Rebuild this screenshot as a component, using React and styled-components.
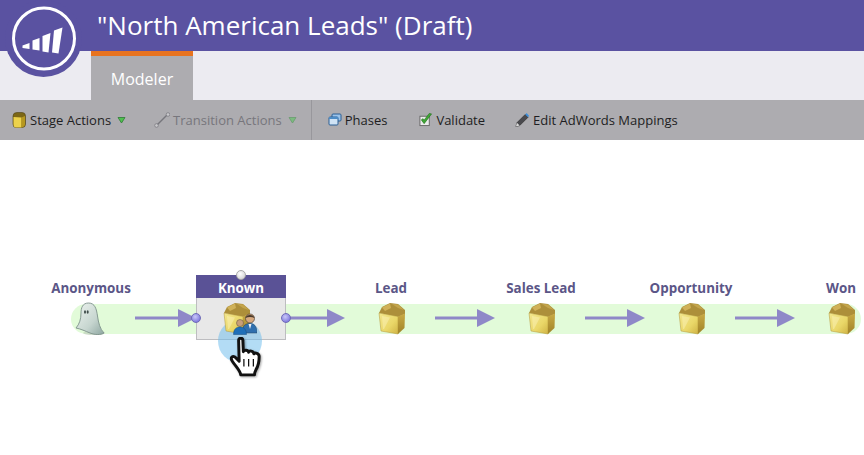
import React from 'react'
import styled, { createGlobalStyle } from 'styled-components'

const Global = createGlobalStyle`
  html, body { margin: 0; padding: 0; background: #fff; }
  body { font-family: "Open Sans", "Liberation Sans", sans-serif; width: 864px; height: 455px; overflow: hidden; }
`

const Page = styled.div`
  position: relative;
  width: 864px;
  height: 455px;
  overflow: hidden;
`

const TitleBar = styled.header`
  height: 51px;
  background: #5a52a1;
  padding-left: 97px;
  display: flex;
  align-items: center;
`

const Title = styled.h1`
  margin: -2px 0 0;
  color: #fff;
  font-size: 26px;
  font-weight: 400;
  white-space: nowrap;
`

const TabBar = styled.div`
  height: 49px;
  background: #ecebf1;
  padding-left: 91px;
  display: flex;
`

const Tab = styled.div`
  width: 102px;
  box-sizing: border-box;
  border-top: 5px solid #e8731f;
  background: #adacb0;
  color: #fff;
  font-size: 16px;
  text-align: center;
  line-height: 47px;
`

const Toolbar = styled.div`
  height: 40px;
  box-sizing: border-box;
  background: #adacb0;
  display: flex;
  align-items: center;
  padding: 0 0 1px 11px;
`

const ToolItem = styled.div`
  display: flex;
  align-items: center;
  gap: ${p => p.$gap}px;
  font-size: 13px;
  color: ${p => (p.$muted ? '#77767c' : '#1e1e22')};
  margin-right: ${p => p.$after ?? 0}px;
  white-space: nowrap;
`

const Caret = styled.svg`
  margin-left: 3px;
`

const Divider = styled.div`
  width: 1px;
  height: 40px;
  margin-bottom: -1px;
  background: #98979c;
  margin-right: 16px;
`

const Canvas = styled.main`
  padding: 138px 0 0 71px;
`

const LabelRow = styled.div`
  width: 790px;
  height: 20px;
  display: flex;
  justify-content: space-between;
`

const StageLabel = styled.div`
  width: 40px;
  display: flex;
  justify-content: center;
  white-space: nowrap;
  color: #5b5687;
  font-size: 13.4px;
  font-weight: 700;
  line-height: 20px;
`

const Lane = styled.div`
  width: 790px;
  height: 30px;
  margin-top: 6px;
  border-radius: 15px;
  background: #e2fbd9;
  display: flex;
  justify-content: space-between;
`

const StageCell = styled.div`
  position: relative;
  width: 40px;
  display: flex;
  align-items: center;
  justify-content: center;
`

const IconSlot = styled.div`
  position: relative;
  flex: none;
  width: 34px;
  height: 36px;
  margin-right: ${p => p.$shift ?? 0}px;
`

const ConnectorCell = styled.div`
  width: 110px;
  display: flex;
  align-items: center;
  justify-content: center;
`

const Arrow = styled.svg`
  margin: 0 2px 2px 0;
`

const KnownNode = styled.div`
  position: absolute;
  left: -25px;
  top: -29px;
  width: 90px;
  height: 65px;
  box-sizing: border-box;
  background: #e8e8e8;
  border: 1px solid #bdbdc0;
  border-top: 0;
`

const KnownHead = styled.div`
  margin: 0 -1px;
  height: 23px;
  background: #5a5296;
  color: #fff;
  font-size: 13.4px;
  font-weight: 700;
  line-height: 26px;
  text-align: center;
`

const Handle = styled.div`
  position: absolute;
  left: ${p => p.$left};
  top: ${p => p.$top}px;
  width: 10px;
  height: 10px;
  margin-left: -5px;
  border-radius: 50%;
  box-sizing: border-box;
  background: ${p =>
    p.$grey
      ? 'radial-gradient(circle at 40% 35%, #fff, #c9c9c9)'
      : 'radial-gradient(circle at 40% 35%, #c9c8f8, #6a63d6)'};
  border: 1px solid ${p => (p.$grey ? '#a9a9a9' : '#6f6bb8')};
`

const Halo = styled.div`
  position: absolute;
  left: -3px;
  top: 15px;
  width: 44px;
  height: 44px;
  border-radius: 50%;
  background: rgba(110, 188, 236, 0.52);
`

const Hand = styled.svg`
  position: absolute;
  left: 8px;
  top: 33px;
  filter: drop-shadow(1px 1px 1px rgba(0, 0, 0, 0.35));
`

const People = styled.svg`
  position: absolute;
  left: 14px;
  top: 12px;
`

const LogoBadge = styled.div`
  position: absolute;
  left: 5px;
  top: 0;
  width: 77px;
  height: 77px;
  border-radius: 50%;
  background: #5a52a1;
`

const BoxIcon = () => (
  <svg width="34" height="36" viewBox="0 0 34 36">
    <defs>
      <linearGradient id="boxFront" x1="0" y1="0" x2="1" y2="1">
        <stop offset="0" stopColor="#f3e78f" />
        <stop offset="0.6" stopColor="#ead768" />
        <stop offset="1" stopColor="#cfb344" />
      </linearGradient>
      <linearGradient id="boxSide" x1="0" y1="0" x2="0" y2="1">
        <stop offset="0" stopColor="#c9aa45" />
        <stop offset="1" stopColor="#a08328" />
      </linearGradient>
    </defs>
    <path d="M5 12 L8 6 L16 2 L24 3 L31 9 L31 13 L24 16 Z" fill="#ad8f3a" />
    <path d="M8 6.500 L16 2.500 L17 7 L11 10 Z" fill="#cfb158" />
    <path d="M18 3 L24 3.500 L30 9 L24 7 Z" fill="#c4a54c" />
    <path d="M5 12 L24 15.500 L24 33 L7 30 Z" fill="url(#boxFront)" stroke="#b0953a" strokeWidth=".5" />
    <path d="M24 15.500 L31 12.500 L30.500 27 L24 33 Z" fill="url(#boxSide)" />
    <path d="M8 15 L16 16.500 L10 28 L9 28 Z" fill="#fff8c8" opacity="0.4" />
  </svg>
)

const GhostIcon = () => (
  <svg width="34" height="36" viewBox="0 0 34 36">
    <defs>
      <linearGradient id="ghost" x1="0" y1="0" x2="1" y2="1">
        <stop offset="0" stopColor="#eef4f0" />
        <stop offset="0.6" stopColor="#c6d5cf" />
        <stop offset="1" stopColor="#8da6a0" />
      </linearGradient>
    </defs>
    <ellipse cx="20" cy="32" rx="11" ry="2" fill="#bfd0ba" opacity="0.7" />
    <path
      d="M14.500 2 C8.500 2 7 7 7 12 C7 18 5.500 23 2 27 C7 28 11 30 16 32 C21 34 27 34 30 32 C26 28 24.500 22 23.500 15 C22.500 8 21 2 14.500 2 Z"
      fill="url(#ghost)"
      stroke="#7d918a"
      strokeWidth="0.9"
    />
    <ellipse cx="11" cy="11" rx="1" ry="1.700" fill="#3f4c4a" />
    <ellipse cx="13.700" cy="11" rx="1" ry="1.700" fill="#3f4c4a" />
  </svg>
)

const Connector = ({ w = 60 }) => (
  <ConnectorCell>
    <Arrow width={w} height="20" viewBox={`0 0 ${w} 20`}>
      <rect x="0" y="8.500" width={w - 17} height="3" fill="#8f88c8" />
      <path d={`M${w - 18} 1 L${w} 10 L${w - 18} 19 Z`} fill="#8f88c8" />
    </Arrow>
  </ConnectorCell>
)

const TriangleDown = ({ fill, edge }) => (
  <Caret width="9" height="8" viewBox="0 0 9 8">
    <path d="M1 1.500 H8 L4.500 7 Z" fill={fill} stroke={edge} strokeWidth=".8" />
  </Caret>
)

const labels = ['Anonymous', '', 'Lead', 'Sales Lead', 'Opportunity', 'Won']

export default function App() {
  return (
    <Page>
      <Global />
      <TitleBar>
        <Title>"North American Leads" (Draft)</Title>
      </TitleBar>
      <TabBar>
        <Tab>Modeler</Tab>
      </TabBar>
      <Toolbar>
        <ToolItem $gap={3} $after={28}>
          <svg width="16" height="18" viewBox="0 0 16 18">
            <path d="M2 5 Q2 1.500 6 1.500 H11 Q14.500 1.500 14.500 5 V13 Q14.500 16.500 11 16.500 H5 Q2 16.500 2 13 Z" fill="#7c6716" stroke="#4f4210" strokeWidth=".6" />
            <path d="M2.500 6 L10.500 6.500 V16.500 H5 Q2.500 16.500 2.500 13 Z" fill="#ecd24c" />
            <path d="M10.500 6.500 L14 5 V13 Q14 15.500 10.500 16.500 Z" fill="#b7981f" />
          </svg>
          Stage Actions
          <TriangleDown fill="#4fc04f" edge="#2f7a35" />
        </ToolItem>
        <ToolItem $gap={3} $muted $after={14}>
          <svg width="16" height="16" viewBox="0 0 16 16">
            <path d="M2 14 L14 2" stroke="#77767c" strokeWidth="1.500" />
            <circle cx="2.500" cy="13.500" r="1.800" fill="#c9c9cc" stroke="#77767c" strokeWidth=".7" />
            <circle cx="14" cy="2.500" r="1.800" fill="#c9c9cc" stroke="#77767c" strokeWidth=".7" />
          </svg>
          Transition Actions
          <TriangleDown fill="#7bbb7f" edge="#6a9a6e" />
        </ToolItem>
        <Divider />
        <ToolItem $gap={3} $after={32}>
          <svg width="14" height="13" viewBox="0 0 14 13">
            <rect x="4" y="1" width="9" height="7" rx="1" fill="#9cc4ea" stroke="#2a5f95" />
            <rect x="1" y="4" width="9" height="8" rx="1" fill="#cfe3f5" stroke="#2a5f95" />
            <rect x="1" y="4" width="9" height="2" fill="#4d8cc6" />
          </svg>
          Phases
        </ToolItem>
        <ToolItem $gap={3} $after={30}>
          <svg width="14" height="15" viewBox="0 0 15 15">
            <rect x="1" y="4" width="10" height="10" fill="#ececec" stroke="#666" />
            <path d="M2.500 8 L5.500 12 L13.500 1.500 L11 1 L5.500 8 L4 6.500 Z" fill="#3fa535" stroke="#1d6c19" strokeWidth=".6" />
          </svg>
          Validate
        </ToolItem>
        <ToolItem $gap={4}>
          <svg width="14" height="16" viewBox="0 0 15 16">
            <path d="M1 15 L2 11 L11 2 L14 5 L5 14 Z" fill="#4a4a4e" stroke="#222" strokeWidth=".6" />
            <path d="M11 2 L12.500 0.500 L15 3.500 L14 5 Z" fill="#3d8fdc" />
            <path d="M1 15 L2 11 L5 14 Z" fill="#d9d9d9" />
          </svg>
          Edit AdWords Mappings
        </ToolItem>
      </Toolbar>

      <Canvas>
        <LabelRow>
          {labels.map(name => (
            <StageLabel key={name}>{name}</StageLabel>
          ))}
        </LabelRow>
        <Lane>
          <StageCell>
            <IconSlot>
              <GhostIcon />
            </IconSlot>
          </StageCell>
          <Connector w={61} />
          <StageCell>
            <KnownNode>
              <KnownHead>Known</KnownHead>
              <Handle $grey $left="50%" $top={-5} />
              <Handle $left="-1px" $top={38} />
              <Handle $left="calc(100% + 1px)" $top={38} />
            </KnownNode>
            <Halo />
            <IconSlot $shift={10}>
              <BoxIcon />
              <People width="24" height="22" viewBox="0 0 24 22">
                <circle cx="17" cy="5.500" r="4.500" fill="#d7a97f" stroke="#4e4238" strokeWidth=".7" />
                <path d="M12.500 5 C13 1 21 1 21.500 5 C19 3.500 15 3.500 12.500 5 Z" fill="#4a3a2c" />
                <path d="M9 20 C9 12 13 10.500 17 10.500 C21 10.500 24 13 24 20 Z" fill="#2f6fae" stroke="#20405f" strokeWidth=".5" />
                <path d="M15.500 11 L17 16 L18.500 11 Z" fill="#f2f2f2" />
                <circle cx="7" cy="10" r="3.500" fill="#c99f78" stroke="#5b4a3a" strokeWidth=".5" />
                <path d="M0.500 21.500 C0.500 16 3.500 14 7 14 C10.500 14 13.500 16 13.500 21.500 Z" fill="#1f6fb8" stroke="#174d80" strokeWidth=".5" />
              </People>
            </IconSlot>
            <Hand width="34" height="40" viewBox="0 0 32 38">
              <path
                d="M9 3 C9 0.500 13 0.500 13 3 L13.500 14 C14 12 18 12 18.500 14.500 C19 12.500 23 13 23.500 16 C24.500 14.500 28.500 15.500 28.500 18.500 C28.500 24 28 27 25.500 31 C24.500 33 24 34 24 36 L11 36 C10.500 32 7 29 3 23 C1 20 2.500 17.500 5.500 19 L9.500 23 Z"
                fill="#fff"
                stroke="#111"
                strokeWidth="2.800"
                strokeLinejoin="round"
              />
              <path d="M14 21 V28 M18.500 21 V28 M23 21 V28" stroke="#111" strokeWidth="1.200" />
            </Hand>
          </StageCell>
          <Connector w={59} />
          <StageCell>
            <IconSlot>
              <BoxIcon />
            </IconSlot>
          </StageCell>
          <Connector />
          <StageCell>
            <IconSlot>
              <BoxIcon />
            </IconSlot>
          </StageCell>
          <Connector />
          <StageCell>
            <IconSlot>
              <BoxIcon />
            </IconSlot>
          </StageCell>
          <Connector />
          <StageCell>
            <IconSlot>
              <BoxIcon />
            </IconSlot>
          </StageCell>
        </Lane>
      </Canvas>

      <LogoBadge>
        <svg width="77" height="77" viewBox="0 0 77 77">
          <circle cx="39" cy="38.500" r="30.500" fill="none" stroke="#fff" strokeWidth="3" />
          <path d="M17.500 45.500 L24.500 43 L24.500 49 L17.500 48 Z" fill="#fff" />
          <path d="M27.500 40.500 L34.500 38 L34.500 50.500 L27.500 49.500 Z" fill="#fff" />
          <path d="M37.500 36 L45.500 33 L43.500 52.500 L37.500 51.500 Z" fill="#fff" />
          <path d="M49 30.500 L57.500 27.500 L53.500 53.500 L47 52.500 Z" fill="#fff" />
        </svg>
      </LogoBadge>
    </Page>
  )
}
